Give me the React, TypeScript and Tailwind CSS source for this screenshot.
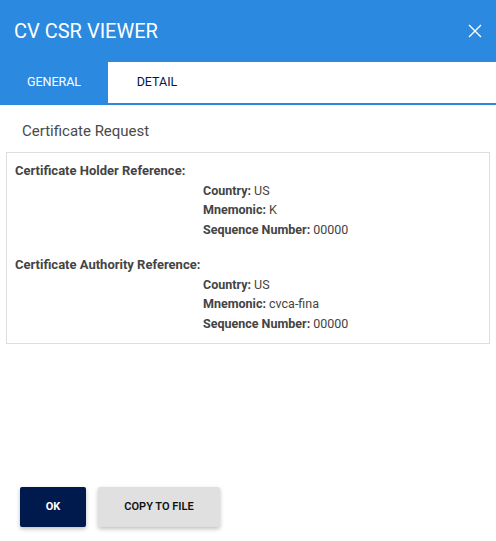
import React, { useState } from 'react';

type Field = { label: string; value: string };

const sections: { title: string; fields: Field[] }[] = [
    {
        title: 'Certificate Holder Reference:',
        fields: [
            { label: 'Country:', value: 'US' },
            { label: 'Mnemonic:', value: 'K' },
            { label: 'Sequence Number:', value: '00000' },
        ],
    },
    {
        title: 'Certificate Authority Reference:',
        fields: [
            { label: 'Country:', value: 'US' },
            { label: 'Mnemonic:', value: 'cvca-fina' },
            { label: 'Sequence Number:', value: '00000' },
        ],
    },
];

const App: React.FC = () => {
    const [tab, setTab] = useState<'general' | 'detail'>('general');

    return (
        <div className="w-[496px] h-[541px] bg-white flex flex-col text-[#444] font-['Roboto',sans-serif]">
            <div className="h-[62px] bg-[#2b8ae0] flex items-center justify-between pl-[14px] pr-[13px]">
                <h1 className="text-white text-[20px] leading-none">CV CSR VIEWER</h1>
                <button className="text-white">
                    <svg width="16" height="16" viewBox="0 0 16 16" fill="none" stroke="currentColor" strokeWidth="1.4">
                        <path d="M2 2 L14 14 M14 2 L2 14" />
                    </svg>
                </button>
            </div>

            <div className="flex h-[43px] border-b-2 border-[#2b8ae0]">
                <button
                    onClick={() => setTab('general')}
                    className={`w-[108px] text-[12.5px] ${tab === 'general' ? 'bg-[#2b8ae0] text-white' : 'text-[#0a1448]'}`}
                >
                    GENERAL
                </button>
                <button
                    onClick={() => setTab('detail')}
                    className={`w-[98px] text-[12.5px] ${tab === 'detail' ? 'bg-[#2b8ae0] text-white' : 'text-[#0a1448]'}`}
                >
                    DETAIL
                </button>
            </div>

            <div className="px-[6px] pt-[17px]">
                <h2 className="pl-[16px] text-[15px] leading-[18px] text-[#4a4a4a]">Certificate Request</h2>
                <div className="mt-[12px] h-[192px] border border-[#dedede] px-[8px] pt-[8px] text-[12.5px] leading-[19.5px]">
                    {sections.map((s) => (
                        <div key={s.title} className="mb-[16px]">
                            <div className="font-bold text-[13px]">{s.title}</div>
                            {s.fields.map((f) => (
                                <div key={f.label} className="pl-[188px]">
                                    <span className="font-bold">{f.label}</span> {f.value}
                                </div>
                            ))}
                        </div>
                    ))}
                </div>
            </div>

            <div className="mt-auto flex gap-[12px] pl-[20px] pb-[14px]">
                <button className="w-[66px] h-[40px] rounded-[2px] bg-[#001a4d] text-white text-[11px] font-bold shadow-[0_2px_4px_rgba(0,0,0,0.25)]">
                    OK
                </button>
                <button className="w-[122px] h-[40px] rounded-[2px] bg-[#e0e0e0] text-[#111] text-[11px] font-semibold shadow-[0_2px_4px_rgba(0,0,0,0.25)]">
                    COPY TO FILE
                </button>
            </div>
        </div>
    );
};

export default App;
